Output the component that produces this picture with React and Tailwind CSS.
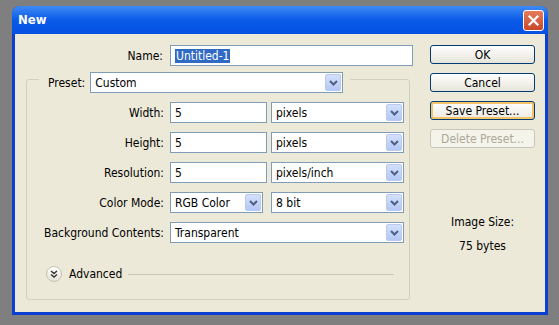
function Chevron() {
  return (
    <svg width="9" height="6" viewBox="0 0 9 6">
      <path d="M1 1 L4.5 4.5 L8 1" fill="none" stroke="#4d6185" strokeWidth="2" />
    </svg>
  );
}

function Select({ value, className }) {
  return (
    <div className={`flex h-[21px] items-center justify-between border border-[#7f9db9] bg-white pl-[4px] pr-[1px] ${className}`}>
      <span>{value}</span>
      <span className="flex h-[17px] w-[16px] items-center justify-center rounded-[2px] border border-[#b9c9ef] bg-gradient-to-b from-[#d4e0fb] to-[#b4c8f5]">
        <Chevron />
      </span>
    </div>
  );
}

function TextBox({ value, className }) {
  return (
    <div className={`flex h-[21px] items-center border border-[#7f9db9] bg-white px-[4px] ${className}`}>
      {value}
    </div>
  );
}

function Row({ label, children }) {
  return (
    <div className="flex h-[21px] items-center">
      <div className="w-[137px] text-right">{label}</div>
      <div className="ml-[6px] flex gap-[4px]">{children}</div>
    </div>
  );
}

function Button({ children, variant }) {
  const base = "flex h-[19px] w-[105px] items-center justify-center rounded-[3px] border";
  if (variant === "disabled") {
    return <div className={`${base} border-[#c9c7ba] bg-[#f5f4ea] text-[#aca899]`}>{children}</div>;
  }
  if (variant === "hover") {
    return (
      <div className={`${base} border-[#003c74] bg-gradient-to-b from-[#fff] to-[#eceae0] shadow-[inset_0_0_0_2px_#f4c36a]`}>
        {children}
      </div>
    );
  }
  return (
    <div className={`${base} border-[#003c74] bg-gradient-to-b from-[#fff] to-[#e6e4da]`}>{children}</div>
  );
}

export default function App() {
  return (
    <div className="h-[325px] w-[559px] overflow-hidden bg-[#7f7f7f] pl-[12px] pt-[6px] font-['DejaVu_Sans_Condensed','DejaVu_Sans',Tahoma,sans-serif] text-[12px] leading-[14px] text-black">
      <div className="flex h-[309px] w-[536px] flex-col rounded-t-[8px] bg-[#0a3fd0]">
        <div className="flex h-[28px] items-center justify-between rounded-t-[8px] bg-gradient-to-b from-[#3d8af5] via-[#0a5ae8] to-[#0650e0] pl-[6px] pr-[4px]">
          <span className="text-[13px] font-bold text-white">New</span>
          <div className="flex h-[21px] w-[21px] items-center justify-center rounded-[3px] border border-white bg-gradient-to-b from-[#e57c5c] to-[#c9462a]">
            <svg width="11" height="11" viewBox="0 0 11 11">
              <path d="M1.5 1.5 L9.5 9.5 M9.5 1.5 L1.5 9.5" stroke="white" strokeWidth="2.2" strokeLinecap="square" />
            </svg>
          </div>
        </div>
        <div className="mx-[3px] mb-[3px] flex flex-1 bg-[#ece9d8] pt-[11px]">
          <div className="w-[400px]">
            <div className="flex h-[21px] items-center">
              <div className="w-[148px] text-right">Name:</div>
              <div className="ml-[7px] flex h-[21px] w-[243px] items-center border border-[#7f9db9] bg-white px-[4px]">
                <span className="bg-[#316ac5] px-[1px] text-white">Untitled-1</span>
              </div>
            </div>
            <div className="relative ml-[11px] mt-[13px] h-[221px] w-[384px] rounded-[3px] border border-[#d0d0bf] pt-[22px]">
              <div className="absolute left-[12px] top-[-8px] flex items-center bg-[#ece9d8] pl-[9px] pr-[7px]">
                <span>Preset:</span>
                <Select value="Custom" className="ml-[5px] w-[253px]" />
              </div>
              <div className="flex flex-col gap-[9px]">
                <Row label="Width:">
                  <TextBox value="5" className="w-[97px]" />
                  <Select value="pixels" className="w-[133px]" />
                </Row>
                <Row label="Height:">
                  <TextBox value="5" className="w-[97px]" />
                  <Select value="pixels" className="w-[133px]" />
                </Row>
                <Row label="Resolution:">
                  <TextBox value="5" className="w-[97px]" />
                  <Select value="pixels/inch" className="w-[133px]" />
                </Row>
                <Row label="Color Mode:">
                  <Select value="RGB Color" className="w-[93px]" />
                  <Select value="8 bit" className="ml-[4px] w-[133px]" />
                </Row>
                <Row label="Background Contents:">
                  <Select value="Transparent" className="w-[234px]" />
                </Row>
              </div>
              <div className="ml-[19px] mt-[23px] flex items-center">
                <div className="flex h-[16px] w-[16px] items-center justify-center rounded-full border border-[#c4c2b4] bg-gradient-to-b from-white to-[#e3e1d5]">
                  <svg width="8" height="8" viewBox="0 0 8 8">
                    <path d="M1 1 L4 3.5 L7 1 M1 4.5 L4 7 L7 4.5" fill="none" stroke="#333" strokeWidth="1.4" />
                  </svg>
                </div>
                <span className="ml-[7px]">Advanced</span>
                <div className="ml-[6px] mr-[15px] h-px flex-1 bg-[#c8c6b8]" />
              </div>
            </div>
          </div>
          <div className="ml-[15px] flex w-[105px] flex-col">
            <div className="flex flex-col gap-[9px]">
              <Button>OK</Button>
              <Button>Cancel</Button>
              <Button variant="hover">Save Preset...</Button>
              <Button variant="disabled">Delete Preset...</Button>
            </div>
            <div className="mt-[67px] text-center">Image Size:</div>
            <div className="mt-[10px] text-center">75 bytes</div>
          </div>
        </div>
      </div>
    </div>
  );
}
